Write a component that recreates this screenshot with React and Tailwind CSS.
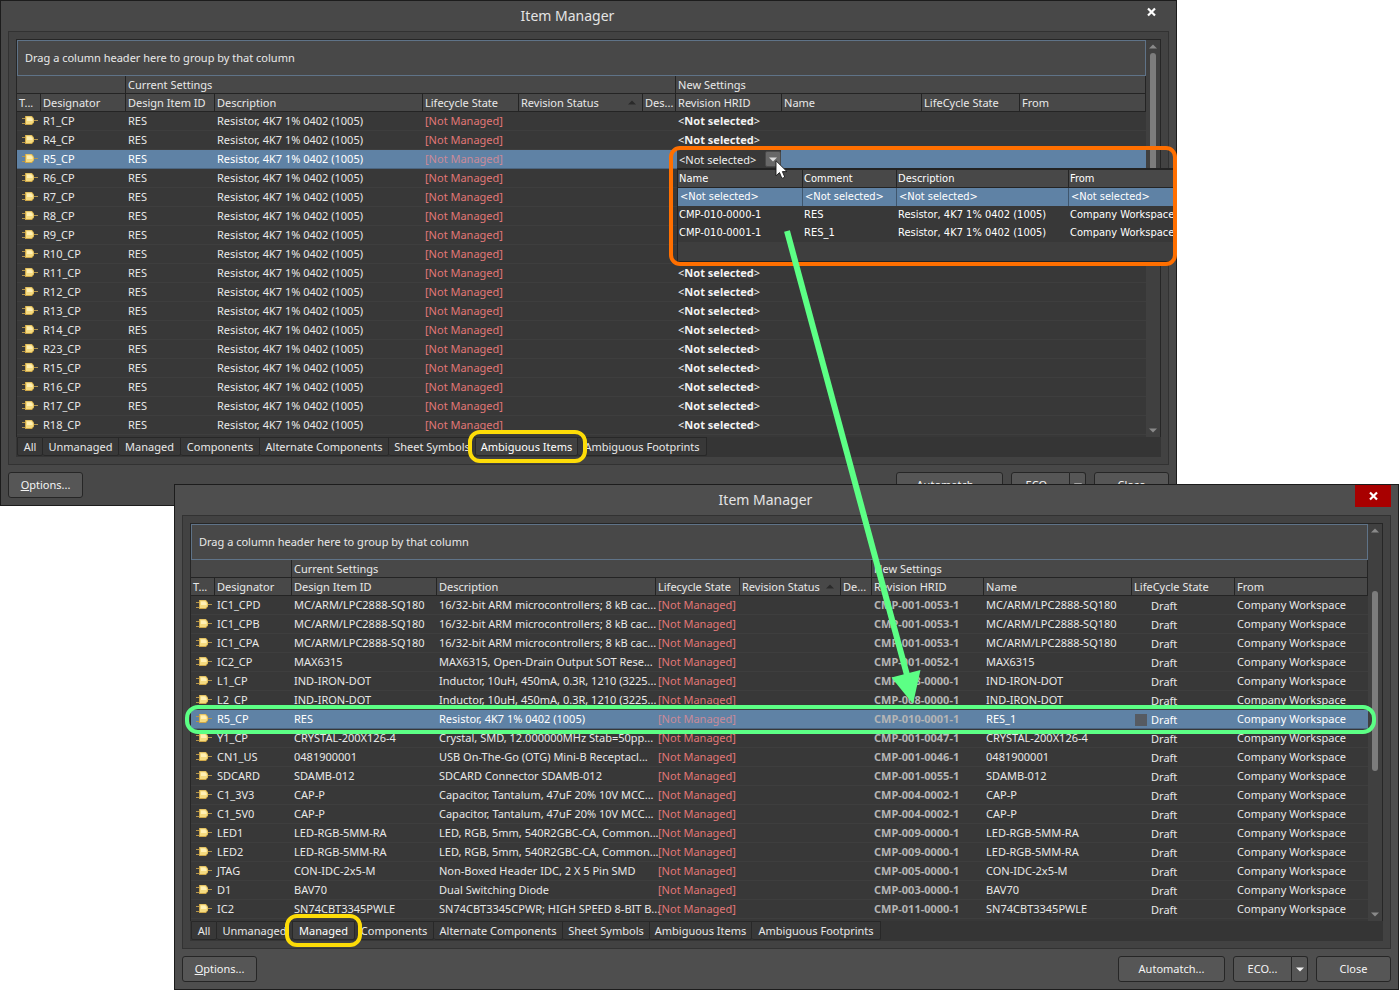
import React from "react";

const TABS = [
  ["All", "w-[26px]"],
  ["Unmanaged", "w-[76px]"],
  ["Managed", "w-[62px]"],
  ["Components", "w-[79px]"],
  ["Alternate Components", "w-[129px]"],
  ["Sheet Symbols", "w-[87px]"],
  ["Ambiguous Items", "w-[102px]"],
  ["Ambiguous Footprints", "w-[129px]"],
];

// Rows that lie beneath the open revision list leave their cell empty.
const UNDER_LIST = ["R6_CP", "R7_CP", "R8_CP", "R9_CP", "R10_CP"];

const AMBIGUOUS_ROWS = [
  "R1_CP", "R4_CP", "R5_CP", "R6_CP", "R7_CP", "R8_CP", "R9_CP", "R10_CP", "R11_CP",
  "R12_CP", "R13_CP", "R14_CP", "R23_CP", "R15_CP", "R16_CP", "R17_CP", "R18_CP",
].map((designator) => ({
  designator,
  item: "RES",
  description: "Resistor, 4K7 1% 0402 (1005)",
}));

const MANAGED_ROWS = [
  ["IC1_CPD", "MC/ARM/LPC2888-SQ180", "16/32-bit ARM microcontrollers; 8 kB cac...", "CMP-001-0053-1"],
  ["IC1_CPB", "MC/ARM/LPC2888-SQ180", "16/32-bit ARM microcontrollers; 8 kB cac...", "CMP-001-0053-1"],
  ["IC1_CPA", "MC/ARM/LPC2888-SQ180", "16/32-bit ARM microcontrollers; 8 kB cac...", "CMP-001-0053-1"],
  ["IC2_CP", "MAX6315", "MAX6315, Open-Drain Output SOT Rese...", "CMP-001-0052-1"],
  ["L1_CP", "IND-IRON-DOT", "Inductor, 10uH, 450mA, 0.3R, 1210 (3225...", "CMP-008-0000-1"],
  ["L2_CP", "IND-IRON-DOT", "Inductor, 10uH, 450mA, 0.3R, 1210 (3225...", "CMP-008-0000-1"],
  ["R5_CP", "RES", "Resistor, 4K7 1% 0402 (1005)", "CMP-010-0001-1", "RES_1"],
  ["Y1_CP", "CRYSTAL-200X126-4", "Crystal, SMD, 12.000000MHz Stab=50pp...", "CMP-001-0047-1"],
  ["CN1_US", "0481900001", "USB On-The-Go (OTG) Mini-B Receptacl...", "CMP-001-0046-1"],
  ["SDCARD", "SDAMB-012", "SDCARD Connector SDAMB-012", "CMP-001-0055-1"],
  ["C1_3V3", "CAP-P", "Capacitor, Tantalum, 47uF 20% 10V MCC...", "CMP-004-0002-1"],
  ["C1_5V0", "CAP-P", "Capacitor, Tantalum, 47uF 20% 10V MCC...", "CMP-004-0002-1"],
  ["LED1", "LED-RGB-5MM-RA", "LED, RGB, 5mm, 540R2GBC-CA, Common...", "CMP-009-0000-1"],
  ["LED2", "LED-RGB-5MM-RA", "LED, RGB, 5mm, 540R2GBC-CA, Common...", "CMP-009-0000-1"],
  ["JTAG", "CON-IDC-2x5-M", "Non-Boxed Header IDC, 2 X 5 Pin SMD", "CMP-005-0000-1"],
  ["D1", "BAV70", "Dual Switching Diode", "CMP-003-0000-1"],
  ["IC2", "SN74CBT3345PWLE", "SN74CBT3345CPWR; HIGH SPEED 8-BIT B...", "CMP-011-0000-1"],
].map(([designator, item, description, hrid, name]) => ({
  designator,
  item,
  description,
  hrid,
  name: name || item,
  state: "Draft",
  from: "Company Workspace",
}));

const AMBIGUOUS_COLS = [
  "w-[24px]", "w-[85px]", "w-[89px]", "w-[208px]", "w-[96px]", "w-[124px]",
  "w-[33px]", "w-[106px]", "w-[140px]", "w-[98px]", "w-auto",
];
const MANAGED_COLS = [
  "w-[24px]", "w-[77px]", "w-[145px]", "w-[219px]", "w-[84px]", "w-[101px]",
  "w-[31px]", "w-[112px]", "w-[148px]", "w-[103px]", "w-auto",
];

function PartIcon() {
  return (
    <svg width="16" height="12" viewBox="0 0 16 12" className="ml-[3px] block" role="img" aria-label="Component">
      <path d="M0 3.500h4M0 8.500h4M11 5.500h5" stroke="#b3944c" strokeWidth="1" fill="none" />
      <path d="M3 1h7l2 2.500v4L10 10H3z" fill="#cfa848" />
      <path d="M4 1.500h5.500L11.500 4v3L9.500 9H4z" fill="#f5db80" />
      <path d="M5 2.500h4L10.500 4.500v1.500H5z" fill="#fff0b4" />
    </svg>
  );
}

function Triangle({ up, className }) {
  return (
    <svg width="8" height="5" viewBox="0 0 8 5" className={className} aria-hidden="true">
      <path d={up ? "M0 4.500L4 0.500L8 4.500z" : "M0 0.500L4 4.500L8 0.500z"} fill="currentColor" />
    </svg>
  );
}

const headCell =
  "h-[18px] border-r border-b border-[#242424] bg-[#484848] pl-0.5 text-left font-normal whitespace-nowrap";

function HeaderCell({ children }) {
  return <th scope="col" className={headCell}>{children}</th>;
}

const OPTIONS = [
  ["<Not selected>", "<Not selected>", "<Not selected>", "<Not selected>"],
  ["CMP-010-0000-1", "RES", "Resistor, 4K7 1% 0402 (1005)", "Company Workspace"],
  ["CMP-010-0001-1", "RES_1", "Resistor, 4K7 1% 0402 (1005)", "Company Workspace"],
];

function RevisionPicker() {
  return (
    <div className="relative flex h-[18px] w-[104px] items-center bg-[#383838]">
      <input
        aria-label="Revision HRID"
        readOnly
        value="<Not selected>"
        className="h-4 min-w-0 flex-1 bg-transparent pl-0.5 text-[#eeeeee] outline-none"
      />
      <button
        type="button"
        aria-label="Show revisions"
        className="flex h-4 w-4 shrink-0 items-center justify-center rounded-xs border border-[#4a4a4a] bg-[#686868] text-[#dddddd]"
      >
        <Triangle />
      </button>
      <div className="absolute top-[18px] left-0 z-20 h-[94px] w-[498px] border-t-2 border-b border-l border-[#232323] bg-[#3e3e3e] font-['DejaVu_Sans_Condensed','Noto_Sans',sans-serif]">
        <table className="w-full table-fixed border-separate border-spacing-0">
          <colgroup>
            <col className="w-[125px]" />
            <col className="w-[94px]" />
            <col className="w-[172px]" />
            <col />
          </colgroup>
          <thead>
            <tr>
              {["Name", "Comment", "Description", "From"].map((label) => (
                <th
                  key={label}
                  scope="col"
                  className="h-[18px] border-r border-b border-[#242424] bg-[#484848] px-px text-left font-normal last:border-r-0"
                >
                  {label}
                </th>
              ))}
            </tr>
          </thead>
          <tbody>
            {OPTIONS.map((cells, i) => (
              <tr key={i} className={i === 0 ? "bg-[#5f82a5] text-white" : "bg-[#383838]"}>
                {cells.map((text, j) => (
                  <td
                    key={j}
                    className={
                      i === 0
                        ? "h-[18px] border-r border-[#3f566d] px-0.5 whitespace-nowrap last:border-r-0"
                        : "h-[18px] px-px whitespace-nowrap"
                    }
                  >
                    {text}
                  </td>
                ))}
              </tr>
            ))}
          </tbody>
        </table>
      </div>
      <div className="pointer-events-none absolute -top-1 -left-2 z-30 h-[120px] w-[508px] rounded-[11px] border-4 border-[#ff6f00]" />
      <svg
        width="14"
        height="20"
        viewBox="0 0 14 20"
        className="pointer-events-none absolute top-[10px] left-[98px] z-40"
        aria-hidden="true"
      >
        <path
          d="M1 0.800V15.800L4.500 12.600L6.900 18.400L9.800 17.200L7.400 11.600H12z"
          fill="#ffffff"
          stroke="#1a1a1a"
          strokeWidth="0.9"
        />
      </svg>
    </div>
  );
}

function Grid({ cols, rows, selected, picker }) {
  return (
    <table className="w-full table-fixed border-separate border-spacing-0">
      <colgroup>
        {cols.map((width, i) => (
          <col key={i} className={width} />
        ))}
      </colgroup>
      <thead>
        <tr>
          <th scope="colgroup" colSpan={2} className={headCell} aria-label="Item" />
          <th scope="colgroup" colSpan={5} className={headCell}>Current Settings</th>
          <th scope="colgroup" colSpan={4} className={headCell}>New Settings</th>
        </tr>
        <tr>
          <HeaderCell>T...</HeaderCell>
          <HeaderCell>Designator</HeaderCell>
          <HeaderCell>Design Item ID</HeaderCell>
          <HeaderCell>Description</HeaderCell>
          <HeaderCell>Lifecycle State</HeaderCell>
          <HeaderCell>
            <span className="flex items-center justify-between pr-1.5">
              Revision Status
              <Triangle up className="text-[#2a2a2a]" />
            </span>
          </HeaderCell>
          <HeaderCell>{picker ? "Des..." : "De..."}</HeaderCell>
          <HeaderCell>Revision HRID</HeaderCell>
          <HeaderCell>Name</HeaderCell>
          <HeaderCell>LifeCycle State</HeaderCell>
          <HeaderCell>From</HeaderCell>
        </tr>
      </thead>
      <tbody>
        {rows.map((row) => {
          const on = row.designator === selected;
          const cell = on
            ? "h-[19px] border-b border-[#4b6580] bg-[#5f82a5] px-0.5 whitespace-nowrap"
            : "h-[19px] border-b border-[#3e3e3e] bg-[#383838] px-0.5 whitespace-nowrap";
          return (
            <tr key={row.designator} className={on ? "relative z-10 text-white" : ""}>
              <td className={cell}>
                <PartIcon />
                {on && !picker && (
                  <span className="pointer-events-none absolute -top-[5px] -right-2 -bottom-[5px] -left-1.5 rounded-[13px] border-4 border-[#5cff85]" />
                )}
              </td>
              <td className={cell}>{row.designator}</td>
              <td className={cell}>{row.item}</td>
              <td className={cell}>{row.description}</td>
              <td className={cell}>
                <span className={on ? "text-[#c98a98]" : "text-[#e07777]"}>[Not Managed]</span>
              </td>
              <td className={cell} />
              <td className={cell} />
              {on && picker ? (
                <td className="h-[19px] border-b border-[#4b6580] bg-[#5f82a5] pl-px">
                  <RevisionPicker />
                </td>
              ) : (
                <td className={cell}>
                  {!picker && <b className="text-[#b5b5b5]">{row.hrid}</b>}
                  {picker && !UNDER_LIST.includes(row.designator) && (
                    <span className="text-[#f2f2f2]">&lt;<b>Not selected</b>&gt;</span>
                  )}
                </td>
              )}
              <td className={cell}>{row.name}</td>
              <td className={cell}>
                {row.state && (
                  <span className="flex items-center gap-1 pt-0.5 pl-px">
                    <span className={on ? "size-3 bg-[#565b62]" : "size-3"} />
                    {row.state}
                  </span>
                )}
              </td>
              <td className={cell}>{row.from}</td>
            </tr>
          );
        })}
      </tbody>
    </table>
  );
}

const buttonBase =
  "flex h-[26px] items-center justify-center border border-[#262626] bg-[#565656] text-[#f4f4f4]";

function ItemManager({ className, closeClass, active, ringClass, thumbClass, ...grid }) {
  return (
    <section
      aria-label="Item Manager"
      className={"absolute flex flex-col border border-[#1c1c1c] px-[7px] pb-[7px] text-[11px] leading-[14px] text-[#e8e8e8] " + className}
    >
      <header className="flex h-[30px] items-start">
        <h1 className="flex-1 pt-[5px] pr-1.5 text-center text-[14px] leading-[20px] text-[#e4e4e4]">Item Manager</h1>
        <button type="button" aria-label="Close window" className={"flex h-[22px] w-9 items-center justify-center text-white " + closeClass}>
          <svg width="9" height="10" viewBox="0 0 9 10" aria-hidden="true">
            <path d="M1 1.500L8 8.500M8 1.500L1 8.500" stroke="currentColor" strokeWidth="2.200" />
          </svg>
        </button>
      </header>

      <div className="border border-[#323232] bg-[#424242] p-[7px]">
        <div className="flex border border-b-0 border-[#262626] bg-[#383838]">
          <div className="min-w-0 flex-1 pb-0.5">
            <div className="flex h-9 items-center border border-[#5f7388] bg-[#484848] px-[7px]">
              Drag a column header here to group by that column
            </div>
            <Grid {...grid} />
          </div>
          <div className="flex w-[14px] flex-col items-center justify-between bg-[#404040] pt-1 pb-1 text-[#8a8a8a]">
            <Triangle up />
            <div className="flex w-full flex-1 justify-center">
              <div className={"w-1.5 rounded-full bg-[#7c7c7c] " + thumbClass} />
            </div>
            <Triangle />
          </div>
        </div>
        <nav role="tablist" aria-label="Item filter" className="flex h-5 bg-[#353535] pb-px pl-px">
          {TABS.map(([label, width]) => {
            const on = label === active;
            return (
              <button
                key={label}
                type="button"
                role="tab"
                aria-selected={on}
                className={
                  "h-[19px] rounded-b-xs border border-l-0 border-[#282828] text-center whitespace-nowrap first:border-l " +
                  (on ? "relative bg-[#414141] text-white " : "bg-[#383838] ") +
                  width
                }
              >
                {label}
                {on && (
                  <span className={"pointer-events-none absolute -top-2 -bottom-2 -left-2 rounded-[12px] border-4 border-[#fddc08] " + ringClass} />
                )}
              </button>
            );
          })}
        </nav>
      </div>

      <footer className="mt-[7px] flex items-center">
        <button type="button" className={buttonBase + " w-[75px] rounded-[3px]"}>
          <span><u>O</u>ptions...</span>
        </button>
        <div className="flex-1" />
        <button type="button" className={buttonBase + " w-[107px] rounded-[3px]"}>Automatch...</button>
        <div className="ml-2 flex">
          <button type="button" className={buttonBase + " w-[59px] rounded-l-[3px]"}>ECO...</button>
          <button type="button" aria-label="More ECO actions" className={buttonBase + " w-4 rounded-r-[3px] border-l-0"}>
            <Triangle />
          </button>
        </div>
        <button type="button" className={buttonBase + " ml-2 w-[75px] rounded-[3px]"}>Close</button>
      </footer>
    </section>
  );
}

export default function App() {
  return (
    <main className="relative min-h-screen overflow-hidden bg-white font-['Noto_Sans','Open_Sans',sans-serif]">
      <ItemManager
        className="top-0 right-[222px] left-0 bg-[#484848]"
        closeClass=""
        active="Ambiguous Items"
        ringClass="-right-2.5"
        thumbClass="mt-1 h-[150px]"
        cols={AMBIGUOUS_COLS}
        rows={AMBIGUOUS_ROWS}
        selected="R5_CP"
        picker
      />
      <ItemManager
        className="top-[484px] right-0 left-[174px] bg-[#4e4e4e]"
        closeClass="bg-[#a80000]"
        active="Managed"
        ringClass="-right-2"
        thumbClass="mt-[58px] h-[180px]"
        cols={MANAGED_COLS}
        rows={MANAGED_ROWS}
        selected="R5_CP"
      />
      <svg
        width="140"
        height="480"
        viewBox="0 0 140 480"
        className="pointer-events-none absolute top-[228px] left-[782px] z-50"
        aria-hidden="true"
      >
        <path d="M5 3L125 447" stroke="#5cff85" strokeWidth="6" />
        <path d="M109.500 449.500L138.500 442L131 476z" fill="#5cff85" />
      </svg>
    </main>
  );
}
